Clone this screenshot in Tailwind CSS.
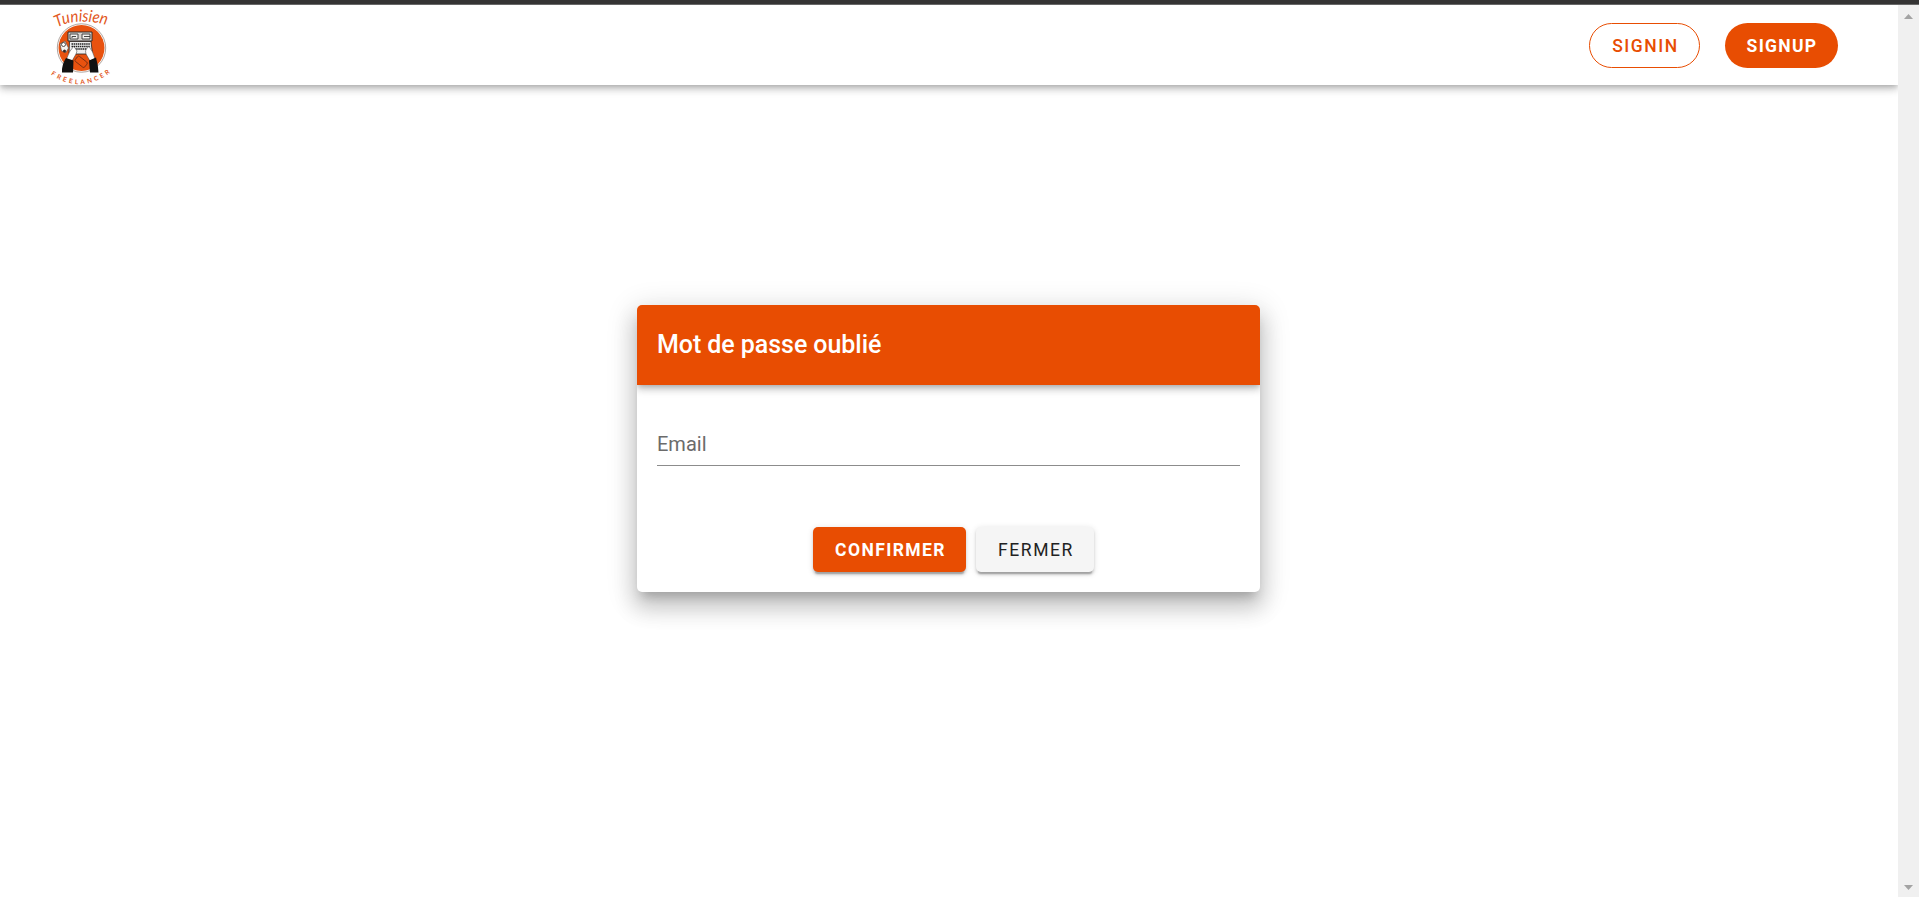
<!DOCTYPE html>
<html lang="fr">
<head>
<meta charset="utf-8">
<title>Mot de passe oublié</title>
<script src="https://cdn.jsdelivr.net/npm/@tailwindcss/browser@4"></script>
</head>
<body class="h-[897px] overflow-hidden bg-white font-[Roboto,sans-serif] flex flex-col">
  <div class="h-[5px] shrink-0 bg-[#353434] border-b border-[#686868]"></div>
  <div class="flex flex-1 min-h-0">
    <div class="w-[1898px] flex flex-col overflow-hidden">
      <header class="h-20 shrink-0 bg-white flex items-center pl-10 pr-[60px] shadow-[0_2.5px_5px_-1.25px_rgba(0,0,0,.2),0_5px_6.25px_0_rgba(0,0,0,.14),0_1.25px_12.5px_0_rgba(0,0,0,.12)]">
        <svg class="w-20 h-20 overflow-visible" viewBox="40 5 80 80" aria-label="Tunisien Freelancer">
          <defs>
            <path id="top" d="M57 27.500 Q78 16.500 108 25.500"/>
            <path id="bottom" d="M50 74 Q80 95 110 73"/>
          </defs>
          <circle cx="81.500" cy="48" r="24.200" fill="#fff" stroke="#8b7c75" stroke-width=".7"/>
          <circle cx="81.500" cy="48" r="23" fill="#e8520f"/>
          <!-- laptop -->
          <path d="M68 32H92V41H68Z" fill="#d8d2ce" stroke="#222" stroke-width=".9"/>
          <path d="M70 34H78V39H70ZM82 34H90V39H82Z" fill="#f4f1ee" stroke="#333" stroke-width=".9"/>
          <path d="M72 38V36.500H76M84 36.500H90" fill="none" stroke="#333" stroke-width=".9"/>
          <path d="M69.500 41.500H91L92.500 54H69Z" fill="#eee" stroke="#222" stroke-width=".8"/>
          <path d="M71.500 44H90M71.500 46.500H90.500M72 49H90" stroke="#222" stroke-width="1.300" stroke-dasharray="1.500 .6"/>
          <!-- cup -->
          <path d="M60 44L65 41L68.500 48L66 52.500L61.500 51Z" fill="#f6f3f0" stroke="#444" stroke-width=".6"/>
          <circle cx="63.500" cy="44.500" r="2" fill="#fff" stroke="#302725" stroke-width=".8"/>
          <circle cx="64.500" cy="51" r="1.500" fill="#302725"/>
          <!-- arms -->
          <path d="M66.500 59Q69 51 73.500 46.500L75 48L77 51L76 54L72 61Z" fill="#fff" stroke="#333" stroke-width=".5"/>
          <path d="M95 59Q93 51 89 46.500L87 48L85.500 51L86 54L90 61Z" fill="#fff" stroke="#333" stroke-width=".5"/>
          <!-- phone -->
          <rect x="75" y="58.500" width="12" height="6.500" rx="1.500" transform="rotate(38 81 62)" fill="#e8520f" stroke="#7b3013" stroke-width=".9"/>
          <path d="M66 58L73.500 60.500L73 72.500H62Q61.500 65 66 58Z" fill="#111"/>
          <path d="M96 57.500L89 60.500L90 72.500H98.500Q98 64 96 57.500Z" fill="#111"/>
          <text fill="#e2571d" font-size="16.500" font-style="italic" font-family="Lato" font-weight="400"><textPath href="#top" textLength="51" lengthAdjust="spacingAndGlyphs">Tunisien</textPath></text>
          <text fill="#e2571d" font-size="6.400" font-family="Lato" font-weight="700"><textPath href="#bottom" startOffset="1" textLength="64">FREELANCER</textPath></text>
        </svg>
        <div class="ml-auto flex gap-[25px] text-[17.5px] tracking-[1.5625px]">
          <button class="w-[111px] h-[45px] pt-0.5 pl-0.5 rounded-full border border-[#e84d02] text-[#e84d02] font-medium">SIGNIN</button>
          <button class="w-[113px] h-[45px] pt-0.5 pl-px rounded-full bg-[#e84d02] text-white font-bold tracking-[1.3px]">SIGNUP</button>
        </div>
      </header>
      <main class="flex-1 flex justify-center pt-[220px]">
        <section class="w-[623px] h-[287px] -ml-px rounded-[5px] bg-white overflow-hidden flex flex-col shadow-[0_8.75px_10px_-5px_rgba(0,0,0,.2),0_15px_21.25px_2.5px_rgba(0,0,0,.14),0_6.25px_27.5px_5px_rgba(0,0,0,.12)]">
          <h1 class="h-20 shrink-0 px-5 flex items-center bg-[#e84d02] text-white text-[25px] font-medium tracking-[-0.06px] shadow-[0_2.5px_5px_-1.25px_rgba(0,0,0,.2),0_5px_6.25px_0_rgba(0,0,0,.14),0_1.25px_12.5px_0_rgba(0,0,0,.12)]">Mot de passe oublié</h1>
          <div class="mx-5 mt-[39px] h-[42px] border-b border-[#8c8c8c] text-[20px] leading-[40px] text-[#6b6b6b]">Email</div>
          <div class="mt-[61px] pl-[10px] flex justify-center gap-[10px] text-[17.5px] tracking-[1.5625px]">
            <button class="w-[153px] h-[45px] pt-px pl-0.5 rounded-[5px] bg-[#e84d02] text-white font-bold tracking-[1.4px] shadow-[0_3.75px_1.25px_-2.5px_rgba(0,0,0,.2),0_2.5px_2.5px_0_rgba(0,0,0,.14),0_1.25px_6.25px_0_rgba(0,0,0,.12)]">CONFIRMER</button>
            <button class="w-[118px] h-[45px] pt-px pl-0.5 rounded-[5px] bg-[#f5f5f5] text-[#222] shadow-[0_3.75px_1.25px_-2.5px_rgba(0,0,0,.2),0_2.5px_2.5px_0_rgba(0,0,0,.14),0_1.25px_6.25px_0_rgba(0,0,0,.12)]">FERMER</button>
          </div>
        </section>
      </main>
    </div>
    <div class="w-[21px] bg-[#f0f0f0] flex flex-col justify-between items-center pt-[9px] pb-[7px]">
      <svg class="w-[9px] h-[5px]" viewBox="0 0 9 5"><path d="M0 5L4.500 0L9 5Z" fill="#a3a3a3"/></svg>
      <svg class="w-[9px] h-[5px]" viewBox="0 0 9 5"><path d="M0 0L4.500 5L9 0Z" fill="#a3a3a3"/></svg>
    </div>
  </div>
</body>
</html>
